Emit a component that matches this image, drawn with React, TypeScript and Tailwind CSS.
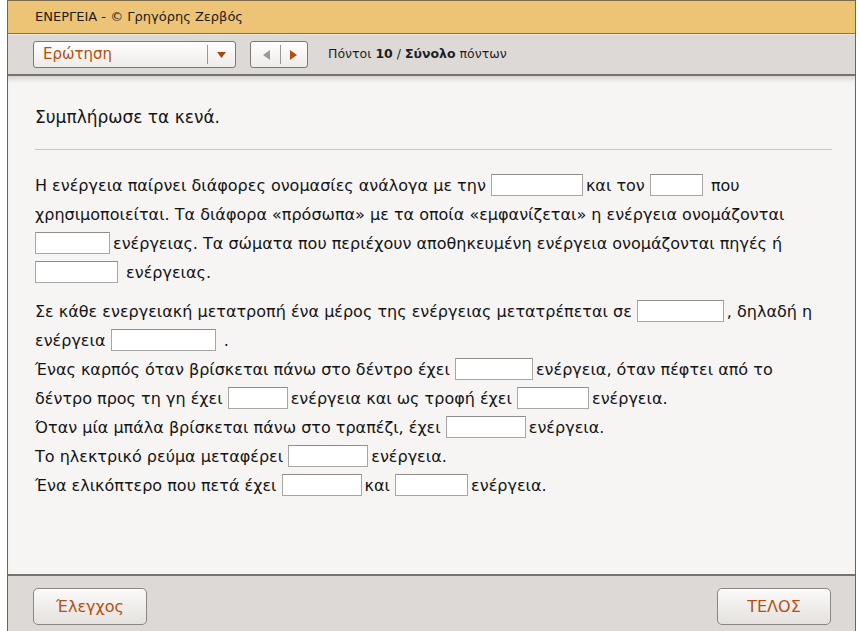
import type { ReactNode } from 'react'

function Blank({ w }: { w: string }) {
  return (
    <span
      className={`inline-block h-[22px] align-middle -mt-[3px] mr-[3px] bg-white border border-[#a8a5a2] border-t-[#8f8c89] ${w}`}
    />
  )
}

function Line({ children, className = '' }: { children: ReactNode; className?: string }) {
  return <div className={`whitespace-nowrap ${className}`}>{children}</div>
}

function Button({ label }: { label: string }) {
  return (
    <button className="w-[114px] h-[37px] rounded-[5px] border border-[#8a8682] bg-gradient-to-b from-[#fbfaf9] to-[#e4e1de] shadow-[inset_0_1px_0_#fff] text-[16px] text-[#b4500f]">
      {label}
    </button>
  )
}

export default function App() {
  return (
    <div className="w-[860px] h-[631px] bg-white overflow-hidden font-['DejaVu_Sans',Verdana,sans-serif]">
      <div className="ml-[7px] w-[849px] h-full flex flex-col border-x border-[#6a655f]">
        {/* title */}
        <div className="h-[34px] shrink-0 bg-[#edc376] border-t border-[#7d6a48] border-b border-b-[#8e7548] flex items-center pl-[27px] text-[13px] text-[#1b1b1b]">
          ΕΝΕΡΓΕΙΑ - © Γρηγόρης Ζερβός
        </div>
        {/* toolbar */}
        <div className="h-[42px] shrink-0 bg-[#dcd9d6] border-t border-[#f3ead8] border-b-2 border-b-[#77726c] flex items-center pl-[25px]">
          <div className="w-[203px] h-[27px] flex items-center rounded-[3px] border border-[#7c7874] bg-gradient-to-b from-[#ffffff] to-[#eeece9]">
            <span className="flex-1 pl-[9px] text-[15px] text-[#b4500f]">Ερώτηση</span>
            <span className="w-px h-[19px] bg-[#9a9692]" />
            <span className="w-[27px] flex justify-center">
              <svg width="9" height="6" viewBox="0 0 9 6">
                <path d="M0 0h9L4.5 6z" fill="#a9470c" />
              </svg>
            </span>
          </div>
          <div className="ml-[14px] w-[58px] h-[27px] flex items-center rounded-[3px] border border-[#7c7874] bg-gradient-to-b from-[#ffffff] to-[#eeece9]">
            <span className="flex-1 flex justify-center pl-[2px]">
              <svg width="7" height="10" viewBox="0 0 7 10">
                <path d="M7 0v10L0 5z" fill="#9b9895" />
              </svg>
            </span>
            <span className="w-px h-[19px] bg-[#9a9692]" />
            <span className="flex-1 flex justify-center">
              <svg width="7" height="10" viewBox="0 0 7 10">
                <path d="M0 0v10l7-5z" fill="#b4500f" />
              </svg>
            </span>
          </div>
          <div className="ml-[20px] text-[12.5px] text-[#1e1e1e]">
            Πόντοι <b>10</b> / <b>Σύνολο</b> πόντων
          </div>
        </div>
        {/* content */}
        <div className="flex-1 bg-[#f6f5f4] shadow-[inset_0_6px_6px_-4px_rgba(0,0,0,0.18)] px-[27px] pt-[31px] text-[16px] text-[#141414]">
          <div className="leading-[20px] text-[17px]">Συμπλήρωσε τα κενά.</div>
          <div className="mt-[22px] h-px w-[797px] bg-[#c9c6c2]" />
          <div className="mt-[21px] leading-[29px]">
            <Line>
              Η ενέργεια παίρνει διάφορες ονομασίες ανάλογα με την <Blank w="w-[92px]" />και τον{' '}
              <Blank w="w-[53px]" /> που
            </Line>
            <Line>χρησιμοποιείται. Τα διάφορα «πρόσωπα» με τα οποία «εμφανίζεται» η ενέργεια ονομάζονται</Line>
            <Line>
              <Blank w="w-[75px]" />
              ενέργειας. Τα σώματα που περιέχουν αποθηκευμένη ενέργεια ονομάζονται πηγές ή
            </Line>
            <Line>
              <Blank w="w-[83px]" /> ενέργειας.
            </Line>
            <Line className="mt-[10px]">
              Σε κάθε ενεργειακή μετατροπή ένα μέρος της ενέργειας μετατρέπεται σε <Blank w="w-[87px]" />, δηλαδή η
            </Line>
            <Line>
              ενέργεια <Blank w="w-[105px]" /> .
            </Line>
            <Line>
              Ένας καρπός όταν βρίσκεται πάνω στο δέντρο έχει <Blank w="w-[78px]" />ενέργεια, όταν πέφτει από το
            </Line>
            <Line>
              δέντρο προς τη γη έχει <Blank w="w-[60px]" />ενέργεια και ως τροφή έχει <Blank w="w-[72px]" />
              ενέργεια.
            </Line>
            <Line>
              Όταν μία μπάλα βρίσκεται πάνω στο τραπέζι, έχει <Blank w="w-[80px]" />ενέργεια.
            </Line>
            <Line>
              Το ηλεκτρικό ρεύμα μεταφέρει <Blank w="w-[80px]" />ενέργεια.
            </Line>
            <Line>
              Ένα ελικόπτερο που πετά έχει <Blank w="w-[80px]" />και <Blank w="w-[73px]" />ενέργεια.
            </Line>
          </div>
        </div>
        {/* footer */}
        <div className="h-[57px] shrink-0 bg-[#dcd9d6] border-t-2 border-[#77726c] flex items-start justify-between pt-[12px] pl-[25px] pr-[24px]">
          <Button label="Έλεγχος" />
          <Button label="ΤΕΛΟΣ" />
        </div>
      </div>
    </div>
  )
}
